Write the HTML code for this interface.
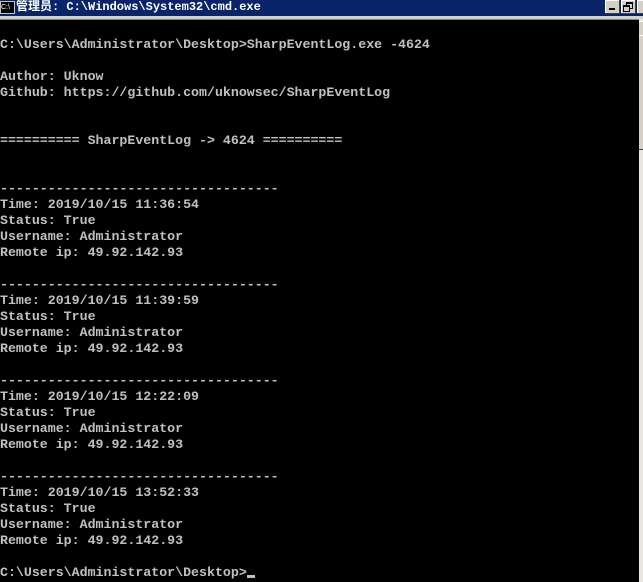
<!DOCTYPE html>
<html><head><meta charset="utf-8"><style>
html,body{margin:0;padding:0;width:643px;height:582px;overflow:hidden;background:#000;}
#title{position:absolute;left:0;top:0;width:643px;height:16px;background:#0a246a;color:#fff;font:bold 12px "Liberation Mono","Noto Sans CJK SC",monospace;line-height:15px;}
#title .ic{position:absolute;left:0;top:1px;width:13px;height:11px;background:#000;border:1px solid #c0c0c0;color:#fff;font:7px "Liberation Sans",sans-serif;line-height:11px;}
#title .t{position:absolute;left:16px;top:0;white-space:pre;}
.btn{position:absolute;top:0;width:14px;height:13px;background:#d4d0c8;border-right:1px solid #404040;border-bottom:1px solid #404040;box-shadow:inset 1px 1px #fff;}
#sep{position:absolute;left:0;top:16px;width:643px;height:3px;background:#d4d0c8;border-bottom:1px solid #808080;}
#sb{position:absolute;left:639px;top:19px;width:4px;height:563px;background:#e8e6e0;}
#sb .a{position:absolute;left:0;top:2px;width:4px;height:13px;background:#d4d0c8;border-top:1px solid #fff;}
#sb .b{position:absolute;left:0;top:16px;width:4px;height:113px;background:#d4d0c8;border-top:1px solid #fff;border-bottom:1px solid #404040;}
pre{position:absolute;left:0;top:37px;margin:0;color:#c0c0c0;font:bold 13.28px "Liberation Mono",monospace;line-height:16px;}
.cur{display:inline-block;width:8px;height:3px;background:#c0c0c0;vertical-align:-2px;}
</style></head><body>
<div id="title"><div class="ic">C:\</div><div class="t">管理员: C:\Windows\System32\cmd.exe</div>
<div class="btn" style="left:605px"><div style="position:absolute;left:4px;top:8px;width:6px;height:2px;background:#000"></div></div>
<div class="btn" style="left:621px"><div style="position:absolute;left:5px;top:2px;width:5px;height:4px;border:1px solid #000;border-top-width:2px"></div><div style="position:absolute;left:2px;top:5px;width:5px;height:4px;border:1px solid #000;border-top-width:2px;background:#d4d0c8"></div></div>
<div class="btn" style="left:637px;width:6px"></div>
</div>
<div id="sep"></div>
<div id="sb"><div class="a"></div><div class="b"></div></div>
<pre>C:\Users\Administrator\Desktop>SharpEventLog.exe -4624

Author: Uknow
Github: https://github.com/uknowsec/SharpEventLog


========== SharpEventLog -> 4624 ==========


-----------------------------------
Time: 2019/10/15 11:36:54
Status: True
Username: Administrator
Remote ip: 49.92.142.93

-----------------------------------
Time: 2019/10/15 11:39:59
Status: True
Username: Administrator
Remote ip: 49.92.142.93

-----------------------------------
Time: 2019/10/15 12:22:09
Status: True
Username: Administrator
Remote ip: 49.92.142.93

-----------------------------------
Time: 2019/10/15 13:52:33
Status: True
Username: Administrator
Remote ip: 49.92.142.93

C:\Users\Administrator\Desktop><span class="cur"></span></pre>
</body></html>
